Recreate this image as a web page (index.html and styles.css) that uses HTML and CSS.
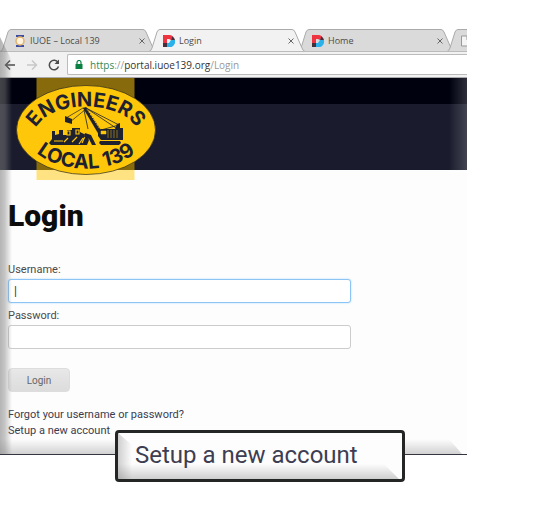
FILE: index.html
```html
<!DOCTYPE html>
<html lang="en">
<head>
  <meta charset="UTF-8">
  <title>Login</title>
  <link rel="stylesheet" href="styles.css">
</head>
<body>

  <svg width="0" height="0" class="defs">
    <symbol id="portalIcon" viewBox="0 0 12 12">
      <path d="M0 0h7a6 6 0 0 1 3 1.500L8 5 6 4H4v4H0z" fill="#ee3341"/>
      <path d="M12 5a6 6 0 0 1-8 7V8h2l2-3z" fill="#2cb2ea"/>
      <path d="M0 8h4v4H0z" fill="#452f3a"/>
      <path d="M9.500 1.200A6 6 0 0 1 12 5H8z" fill="#452f3a"/>
    </symbol>
    <symbol id="tabShape" viewBox="0 0 156 23" preserveAspectRatio="none">
      <path d="M0 22.5Q2 22 3 19L8 3Q9 .5 11 .5H143Q145 .5 146 3L153 19Q154 22 156 22.5"/>
    </symbol>
  </svg>

  <div class="browser">
    <div class="tabs">
      <div class="tab">
        <svg class="tab-bg"><use href="#tabShape"/></svg>
        <svg class="tab-icon" viewBox="0 0 12 12">
          <path d="M2 0h8v2H2zM2 10h8v2H2z" fill="#3c4ca0"/>
          <circle cx="6" cy="6" r="4" fill="#fff3df" stroke="#e0b169" stroke-width="1.5"/>
        </svg>
        <span class="tab-title">IUOE – Local 139</span>
        <button class="tab-close" aria-label="Close tab"><svg viewBox="0 0 6 6"><path d="M.5 .5l5 5M5.500 .5l-5 5"/></svg></button>
      </div>
      <div class="tab active">
        <svg class="tab-bg"><use href="#tabShape"/></svg>
        <svg class="tab-icon"><use href="#portalIcon"/></svg>
        <span class="tab-title">Login</span>
        <button class="tab-close" aria-label="Close tab"><svg viewBox="0 0 6 6"><path d="M.5 .5l5 5M5.500 .5l-5 5"/></svg></button>
      </div>
      <div class="tab">
        <svg class="tab-bg"><use href="#tabShape"/></svg>
        <svg class="tab-icon"><use href="#portalIcon"/></svg>
        <span class="tab-title">Home</span>
        <button class="tab-close" aria-label="Close tab"><svg viewBox="0 0 6 6"><path d="M.5 .5l5 5M5.500 .5l-5 5"/></svg></button>
      </div>
      <div class="tab">
        <svg class="tab-bg"><use href="#tabShape"/></svg>
        <svg class="tab-icon" viewBox="0 0 12 12"><path d="M.5 1h6l3 3v7h-9zM6 1v4h3" fill="#f4f4f4" stroke="#999"/></svg>
      </div>
    </div>

    <div class="toolbar">
      <button class="nav" aria-label="Back"><svg viewBox="0 0 12 12"><path d="M11 6H1.500M6 1.500L1.500 6 6 10.500"/></svg></button>
      <button class="nav disabled" aria-label="Forward" disabled><svg viewBox="0 0 12 12"><path d="M1 6h9.500M6 1.500L10.500 6 6 10.500"/></svg></button>
      <button class="nav" aria-label="Reload"><svg viewBox="0 0 12 12"><path d="M10 3.500A4.700 4.700 0 1 0 10.500 7.500"/><path d="M11 .5V5H6.500z" class="solid"/></svg></button>
      <div class="address">
        <svg class="lock" viewBox="0 0 8 9"><path d="M0.500 4h7v5h-7z" fill="#0b8043"/><path d="M2 4V2.500a2 2 0 0 1 4 0V4" fill="none" stroke="#0b8043" stroke-width="1.200"/></svg>
        <span class="url"><span class="secure">https</span><span class="dim">://</span>portal.iuoe139.org<span class="dim">/Login</span></span>
      </div>
    </div>

    <header class="banner">
      <svg class="logo" viewBox="16 78 140 102" role="img" aria-label="Engineers Local 139">
        <path d="M36.500 78h98v92h-98z" fill="#866a0b"/>
        <path d="M36.500 170h98v10h-98z" fill="#ffe382"/>
        <ellipse cx="86" cy="130" rx="69.500" ry="44.500" fill="#fec709" stroke="#2b2820" stroke-width=".7"/>
        <path id="topArc" d="M34 132C46 98 126 98 138 132" fill="none"/>
        <path id="bottomArc" d="M26 140C46 178 126 178 146 140" fill="none"/>
        <text class="logo-text"><textPath href="#topArc" startOffset="50%">ENGINEERS</textPath></text>
        <text class="logo-text"><textPath href="#bottomArc" startOffset="50%">LOCAL 139</textPath></text>
        <g fill="#1d2130">
          <path d="M65 116l7 3v5l-7-2z"/>
          <path d="M66 118l17-10 3 1-16 13z" fill="none" stroke="#1d2130" stroke-width=".7"/>
          <path d="M83 108l3-1 17 26-4 2z"/>
          <path d="M87 109l13 20" stroke="#fec709" stroke-width="1" stroke-dasharray="2 1"/>
          <path d="M86 108l33 17-18 5M86 108l30 20M84 110l4 19" fill="none" stroke="#1d2130" stroke-width=".8"/>
          <path d="M117 124l3-1v5h3v12h-22l-3-4v-5l3-2h14z"/>
          <path d="M108 130v8m3-8v8m3-8v8m3-8v8M101 131h5v3h-5z" stroke="#fec709" stroke-width=".5" fill="#fec709"/>
          <path d="M100 141h20l1 2-2 2h-18l-2-2z"/>
          <path d="M52 135v-4h3v4l4-1v-4h4v5h4v-5h5v-2h8v4l6 3 3 5-2 5H51l-2-2 3-4z"/>
          <path d="M54 141h9M67 131h3v4h-3zM76 130h3v4h-3zM64 142l4-4m4 4l5-5m2 7l4-6m3-4l-4 9" fill="none" stroke="#fec709" stroke-width="1.200"/>
          <path d="M85 133l6 2 3 6 2 4h-4l-3-6-5-2z"/>
        </g>
      </svg>
    </header>

    <main class="page">
      <h1>Login</h1>
      <form class="login-form">
        <label for="username">Username:</label>
        <input class="focused" type="text" id="username" value="|">
        <label for="password">Password:</label>
        <input type="password" id="password">
        <button type="submit">Login</button>
      </form>
      <div class="links">
        <a href="#">Forgot your username or password?</a>
        <a href="#">Setup a new account</a>
      </div>
    </main>
    <div class="shade left"></div>
    <div class="shade right"></div>
    <div class="shade bottom"></div>

    <a class="callout" href="#">Setup a new account</a>
  </div>

</body>
</html>
```

FILE: styles.css
```css
* {
  box-sizing: border-box;
}

body {
  min-height: 100vh;
  margin: 0;
  padding: 29px 73px 56px 0;
  background-color: #fff;
  font-family: Roboto, "Liberation Sans", sans-serif;
  font-size: 11px;
  color: #4a4a4a;
}

.defs {
  position: absolute;
}

.browser {
  position: relative;
  background-color: #fdfdfd;
  border-bottom: 1px solid #35353f;
}

button {
  padding: 0;
  border: none;
  background: none;
  font-family: inherit;
}

/* browser tabs */
.tabs {
  display: flex;
  height: 23px;
  overflow: hidden;
  background-color: #fff;
  font-family: "Open Sans", sans-serif;
  font-size: 9px;
  border-bottom: 1px solid #bbb;
}

.tab {
  position: relative;
  display: flex;
  flex: 0 0 156px;
  align-items: center;
  height: 23px;
  margin-right: -7px;
  padding: 0 11px 0 14px;
}

.tab.active {
  z-index: 1;
}

.tab-bg {
  position: absolute;
  top: 0;
  left: 0;
  width: 156px;
  height: 23px;
  fill: #dadada;
  stroke: #aaa;
}

.active .tab-bg {
  fill: #f2f2f2;
}

.tab-icon {
  position: relative;
  width: 12px;
  height: 12px;
}

.tab-title {
  position: relative;
  flex: 1;
  margin-left: 4px;
}

.tab-close {
  position: relative;
  display: flex;
}

.tab-close svg {
  width: 6px;
  height: 6px;
  stroke: #666;
}

/* address bar */
.toolbar {
  display: flex;
  align-items: center;
  height: 26px;
  padding-left: 4px;
  background-color: #f2f2f2;
  border-bottom: 1px solid #aaa;
}

.nav {
  display: flex;
  margin-right: 10px;
}

.nav svg {
  width: 12px;
  height: 12px;
  fill: none;
  stroke: #4c4c4c;
  stroke-width: 1.5;
}

.nav.disabled svg {
  stroke: #c8c8c8;
}

.nav .solid {
  fill: #4c4c4c;
  stroke: none;
}

.nav:nth-child(3) {
  margin-right: 7px;
}

.address {
  display: flex;
  flex: 1;
  align-items: center;
  height: 21px;
  padding-left: 7px;
  background-color: #fff;
  border: 1px solid #bbb;
  border-right: none;
  border-radius: 2px 0 0 2px;
  font-family: "Open Sans", sans-serif;
  font-size: 10px;
  color: #333;
}

.lock {
  width: 8px;
  height: 9px;
  margin-right: 7px;
}

.secure {
  color: #2f8a5b;
}

.dim {
  color: #999;
}

/* site header */
.banner {
  position: relative;
  height: 92px;
  background: linear-gradient(#00010f 26px, #1a1b2c 26px);
}

.logo {
  position: absolute;
  top: 0;
  left: 16px;
  width: 140px;
  height: 102px;
}

.logo-text {
  font-family: Inter, sans-serif;
  font-size: 20px;
  font-weight: 700;
  fill: #1d2130;
  text-anchor: middle;
}

/* login page */
.page {
  padding: 28px 8px 15px;
}

h1 {
  margin: 0 0 27px;
  font-size: 30px;
  font-weight: 900;
  line-height: 36px;
  color: #0c0c0c;
}

.login-form {
  display: flex;
  flex-direction: column;
  align-items: flex-start;
}

label {
  line-height: 18px;
}

input {
  width: 100%;
  max-width: 343px;
  height: 24px;
  margin-bottom: 4px;
  padding: 0 5px;
  border: 1px solid #ccc;
  border-radius: 3px;
  background-color: #fff;
  font-family: inherit;
  font-size: 12px;
  color: #333;
  outline: none;
}

input.focused {
  border-color: #8cc4f5;
  box-shadow: 0 0 2px #a9d5fa;
}

.login-form button {
  width: 62px;
  height: 24px;
  margin: 15px 0;
  border: 1px solid #ddd;
  border-radius: 4px;
  background: linear-gradient(#e8e8e8, #dcdcdc);
  font-size: 10px;
  color: #666;
}

.links {
  display: flex;
  flex-direction: column;
  align-items: flex-start;
}

.links a {
  line-height: 16px;
  color: #3b3c50;
  text-decoration: none;
}

/* shaded edges of the window */
.shade {
  position: absolute;
  pointer-events: none;
}

.left {
  top: 0;
  bottom: 0;
  left: 0;
  width: 12px;
  background: linear-gradient(to right, rgba(120, 120, 120, 0.55), rgba(130, 130, 130, 0.45) 40%, transparent);
  clip-path: polygon(0 8px, 100% 32px, 100% 100%, 0 100%);
}

.right {
  top: 49px;
  right: 0;
  width: 18px;
  height: 92px;
  background: linear-gradient(to right, transparent, rgba(255, 255, 255, 0.18));
}

.bottom {
  right: 0;
  bottom: 0;
  left: 0;
  height: 15px;
  background: linear-gradient(transparent, rgba(130, 130, 130, 0.35));
  clip-path: polygon(0 0, calc(100% - 18px) 0, calc(100% - 5px) 100%, 0 100%);
}

/* enlarged link over the bottom edge */
.callout {
  position: absolute;
  bottom: -28px;
  left: 115px;
  width: 290px;
  height: 52px;
  padding-left: 17px;
  border: 3px solid #242626;
  border-radius: 4px;
  background-color: #fdfdfd;
  font-size: 24px;
  line-height: 44px;
  color: #3d3e52;
  text-decoration: none;
}

.callout::before {
  content: "";
  position: absolute;
  inset: 0;
  background:
    linear-gradient(to right, rgba(120, 120, 120, 0.35), transparent 14px),
    linear-gradient(to top, rgba(120, 120, 120, 0.35), transparent 15px);
  clip-path: polygon(0 0, 14px 12px, 20px calc(100% - 15px), calc(100% - 18px) calc(100% - 15px), calc(100% - 3px) 100%, 0 100%);
}
```
